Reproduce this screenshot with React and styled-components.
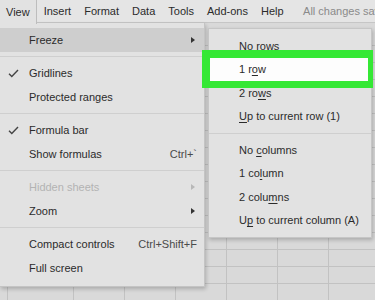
import React from 'react'
import styled, { createGlobalStyle } from 'styled-components'

const GlobalStyle = createGlobalStyle`
  html, body {
    margin: 0;
    padding: 0;
  }
  body {
    font-family: "Liberation Sans", Arial, sans-serif;
    background: #d9d9d9;
  }
`

const Screen = styled.div`
  position: relative;
  width: 375px;
  height: 300px;
  overflow: hidden;
  background: #d9d9d9;
  color: #2b2b2b;
  font-size: 11px;
`

const MenuBar = styled.div`
  display: flex;
  align-items: stretch;
  height: 23px;
  box-sizing: border-box;
  background: #e5e5e5;
  border-bottom: 1px solid #c6c6c6;
`

const MenuTab = styled.div`
  display: flex;
  align-items: center;
  flex-shrink: 0;
  padding: 0 6.5px;
  white-space: nowrap;
  box-sizing: border-box;
  ${p => p.$open && `
    margin-left: -2px;
    padding-left: 7px;
    height: 24px;
    background: #e2e2e2;
    border-left: 1px solid #bdbdbd;
    border-right: 1px solid #bdbdbd;
    position: relative;
    z-index: 3;
  `}
`

const SaveStatus = styled.div`
  display: flex;
  align-items: center;
  flex-shrink: 0;
  margin-left: 13px;
  color: #8a8a8a;
  white-space: nowrap;
`

const Sheet = styled.div`
  display: grid;
  grid-template-columns: 8px 66px repeat(6, 51px);
  grid-auto-rows: 17px;
  padding-top: 6px;
`

const Cell = styled.div`
  box-sizing: border-box;
  border-right: 1px solid #c2c2c2;
  border-bottom: 1px solid #c2c2c2;
`

const Menu = styled.div`
  position: absolute;
  z-index: 2;
  box-sizing: border-box;
  background: #e2e2e2;
  box-shadow: 1px 2px 4px rgba(0, 0, 0, 0.22);
`

const Dropdown = styled(Menu)`
  top: 23px;
  left: 0;
  width: 205px;
  padding: 5px 0 6px;
  border-right: 1px solid #c4c4c4;
  border-bottom: 1px solid #c4c4c4;
`

const SubMenu = styled(Menu)`
  top: 28px;
  left: 208px;
  width: 164px;
  padding: 5px 0;
  border: 1px solid #c6c6c6;
  z-index: 4;
`

const Item = styled.div`
  position: relative;
  display: flex;
  align-items: center;
  height: 23.5px;
  padding: 0 7px 0 ${p => p.$indent}px;
  white-space: nowrap;
  background: ${p => (p.$selected ? '#fdfdfd' : p.$active ? '#cecece' : 'transparent')};
  color: ${p => (p.$disabled ? '#b3b3b3' : '#2b2b2b')};
`

const Gutter = styled.span`
  display: flex;
  align-items: center;
  width: 21px;
`

const Label = styled.span`
  flex: 1;
`

const Shortcut = styled.span`
  color: #4a4a4a;
`

const Arrow = styled.span`
  width: 0;
  height: 0;
  margin-right: 2px;
  border-top: 3px solid transparent;
  border-bottom: 3px solid transparent;
  border-left: 4px solid ${p => (p.$disabled ? '#b8b8b8' : '#333')};
`

const Key = styled.span`
  text-decoration: underline;
  text-underline-offset: 2px;
`

const Separator = styled.div`
  height: 1px;
  margin: 4.5px 0;
  background: #cfcfcf;
`

const Highlight = styled.div`
  position: absolute;
  top: -8px;
  bottom: -7px;
  left: -7px;
  right: -2px;
  border-style: solid;
  border-color: #35e835;
  border-width: 8px 5px 7px 8px;
  pointer-events: none;
`

const Check = () => (
  <svg width="11" height="9" viewBox="0 0 11 9">
    <path d="M1 4.8 L3.8 7.6 L10 1" fill="none" stroke="#444" strokeWidth="1.4" />
  </svg>
)

const topMenus = ['Insert', 'Format', 'Data', 'Tools', 'Add-ons', 'Help']

const viewMenu = [
  { label: 'Freeze', arrow: true, active: true },
  'sep',
  { label: 'Gridlines', check: true },
  { label: 'Protected ranges' },
  'sep',
  { label: 'Formula bar', check: true },
  { label: 'Show formulas', shortcut: 'Ctrl+`' },
  'sep',
  { label: 'Hidden sheets', arrow: true, disabled: true },
  { label: 'Zoom', arrow: true },
  'sep',
  { label: 'Compact controls', shortcut: 'Ctrl+Shift+F' },
  { label: 'Full screen' },
]

const freezeMenu = [
  ['No ', 'r', 'ows'],
  ['1 r', 'o', 'w', true],
  ['2 ro', 'w', 's'],
  ['', 'U', 'p to current row (1)'],
  'sep',
  ['No ', 'c', 'olumns'],
  ['1 co', 'l', 'umn'],
  ['2 colu', 'm', 'ns'],
  ['U', 'p', ' to current column (A)'],
]

export default function App() {
  return (
    <Screen>
      <GlobalStyle />
      <MenuBar>
        <MenuTab $open>View</MenuTab>
        {topMenus.map(m => <MenuTab key={m}>{m}</MenuTab>)}
        <SaveStatus>All changes saved in Drive</SaveStatus>
      </MenuBar>

      <Sheet>
        {Array.from({ length: 16 * 8 }).map((_, i) => <Cell key={i} />)}
      </Sheet>

      <Dropdown>
        {viewMenu.map((it, i) =>
          it === 'sep' ? <Separator key={i} /> : (
            <Item key={i} $indent={8} $active={it.active} $disabled={it.disabled}>
              <Gutter>{it.check && <Check />}</Gutter>
              <Label>{it.label}</Label>
              {it.shortcut && <Shortcut>{it.shortcut}</Shortcut>}
              {it.arrow && <Arrow $disabled={it.disabled} />}
            </Item>
          )
        )}
      </Dropdown>

      <SubMenu>
        {freezeMenu.map((it, i) =>
          it === 'sep' ? <Separator key={i} /> : (
            <Item key={i} $indent={30} $selected={it[3]}>
              <Label>{it[0]}<Key>{it[1]}</Key>{it[2]}</Label>
              {it[3] && <Highlight />}
            </Item>
          )
        )}
      </SubMenu>
    </Screen>
  )
}
